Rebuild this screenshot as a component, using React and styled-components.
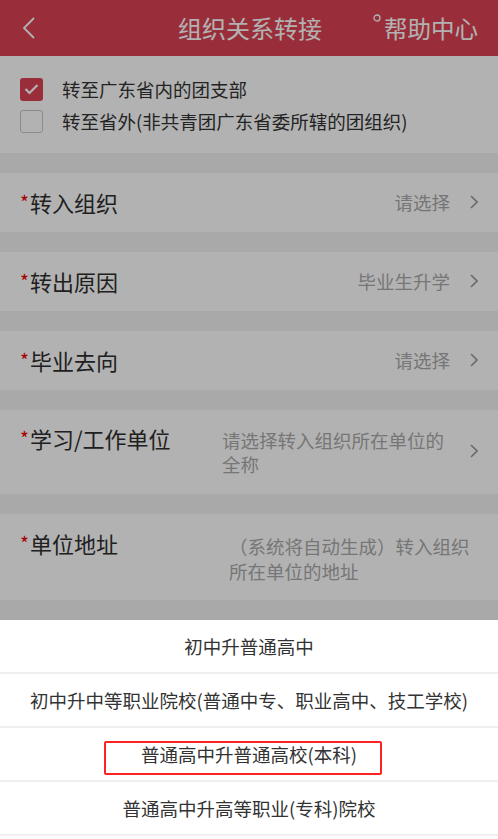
import styled, { createGlobalStyle } from "styled-components";

const GlobalStyle = createGlobalStyle`
  html, body {
    margin: 0;
    padding: 0;
    height: 100%;
    overflow: hidden;
    background: #f3f3f3;
  }
  body {
    font-family: "Noto Sans CJK SC", "Noto Sans", sans-serif;
    color: #333;
  }
`;

const Page = styled.div`
  width: 498px;
  min-height: 839px;
  background: #f3f3f3;
`;

const Header = styled.div`
  height: 56px;
  background: #dc4353;
  display: grid;
  grid-template-columns: 1fr auto 1fr;
  align-items: center;
  padding: 0 20px 0 22px;
  box-sizing: border-box;
  color: #fff;
`;

const Title = styled.div`
  font-size: 24px;
  line-height: 30px;
`;

const Help = styled.div`
  justify-self: end;
  display: flex;
  align-items: flex-start;
  font-size: 23.5px;
  line-height: 30px;
  gap: 3px;

  svg {
    margin-top: 1px;
  }
`;

const CheckSection = styled.div`
  background: #fff;
  padding: 17px 20px 16px;
  display: flex;
  flex-direction: column;
`;

const Option = styled.div`
  height: 32px;
  display: flex;
  align-items: center;
  gap: 19px;
  font-size: 18.5px;
  color: #333;
`;

const Box = styled.div`
  width: 23px;
  height: 23px;
  box-sizing: border-box;
  border-radius: 3px;
  background: ${(p) => (p.$checked ? "#dc4353" : "#fff")};
  border: ${(p) => (p.$checked ? "none" : "1.5px solid #c8c8c8")};
  display: flex;
  align-items: center;
  justify-content: center;
`;

const Stack = styled.div`
  display: flex;
  flex-direction: column;
  gap: 20px;
  margin-top: 20px;
`;

const Row = styled.div`
  background: #fff;
  display: flex;
  align-items: ${(p) => (p.$top ? "flex-start" : "center")};
  height: ${(p) => (p.$top ? "auto" : "59px")};
  padding: ${(p) => p.$pad || "0 20px 1px"};
  box-sizing: border-box;
`;

const Label = styled.div`
  font-size: 22px;
  line-height: 26px;
  color: #2e2e2e;
  white-space: nowrap;
  flex-shrink: 0;
`;

const Star = styled.span`
  color: #e00;
  font-size: 19px;
  line-height: 0;
  vertical-align: 2px;
  margin-right: 1px;
`;

const Value = styled.div`
  margin-left: auto;
  font-size: 18.5px;
  line-height: ${(p) => p.$lh || 24}px;
  color: #aaa;
  width: ${(p) => (p.$w ? `${p.$w}px` : "auto")};
  margin-top: ${(p) => p.$mt || 0}px;
  text-align: left;
`;

const Chevron = styled.svg`
  margin-left: 20px;
  flex-shrink: 0;
  align-self: center;
`;

const SectionTitle = styled.div`
  padding: 15px 20px 0 32px;
  font-size: 22px;
  line-height: 30px;
  color: #2e2e2e;
`;

const Mask = styled.div`
  position: fixed;
  inset: 0;
  background: rgba(0, 0, 0, 0.3);
`;

const Sheet = styled.div`
  position: fixed;
  left: 0;
  right: 0;
  bottom: 0;
  height: 219px;
  background: #fff;
  overflow: hidden;
`;

const SheetItem = styled.div`
  position: relative;
  height: 52px;
  border-bottom: 2px solid #efefef;
  display: flex;
  align-items: center;
  justify-content: center;
  font-size: 18.5px;
  color: #333;
  white-space: nowrap;
`;

const Highlight = styled.div`
  position: absolute;
  left: 104px;
  top: 13px;
  width: 278px;
  height: 34px;
  box-sizing: border-box;
  border: 2px solid #f22;
  border-radius: 2px;
`;

function Arrow() {
  return (
    <Chevron width="8" height="14" viewBox="0 0 8 14">
      <polyline
        points="1,1 7,7 1,13"
        fill="none"
        stroke="#999"
        strokeWidth="1.6"
      />
    </Chevron>
  );
}

const fields = [
  { label: "转入组织", value: "请选择" },
  { label: "转出原因", value: "毕业生升学" },
  { label: "毕业去向", value: "请选择" },
];

const choices = [
  "初中升普通高中",
  "初中升中等职业院校(普通中专、职业高中、技工学校)",
  "普通高中升普通高校(本科)",
  "普通高中升高等职业(专科)院校",
];

function App() {
  return (
    <>
      <GlobalStyle />
      <Page>
        <Header>
          <svg width="14" height="22" viewBox="0 0 14 22">
            <polyline
              points="12,1 2,11 12,21"
              fill="none"
              stroke="#fff"
              strokeWidth="1.8"
            />
          </svg>
          <Title>组织关系转接</Title>
          <Help>
            <svg width="8" height="8" viewBox="0 0 8 8">
              <circle cx="4" cy="4" r="3" fill="none" stroke="#fff" strokeWidth="1.3" />
            </svg>
            帮助中心
          </Help>
        </Header>

        <CheckSection>
          <Option>
            <Box $checked>
              <svg width="15" height="12" viewBox="0 0 15 12">
                <polyline
                  points="1.5,6 5.5,10 13.5,2"
                  fill="none"
                  stroke="#fff"
                  strokeWidth="2.2"
                />
              </svg>
            </Box>
            转至广东省内的团支部
          </Option>
          <Option>
            <Box />
            转至省外(非共青团广东省委所辖的团组织)
          </Option>
        </CheckSection>

        <Stack>
          {fields.map((f) => (
            <Row key={f.label}>
              <Label>
                <Star>*</Star>
                {f.label}
              </Label>
              <Value>{f.value}</Value>
              <Arrow />
            </Row>
          ))}
          <Row $top $pad="15px 20px 18px">
            <Label>
              <Star>*</Star>
              学习/工作单位
            </Label>
            <Value $w={228} $mt={3}>
              请选择转入组织所在单位的全称
            </Value>
            <Arrow />
          </Row>
          <Row $top $pad="16px 20px 16px">
            <Label>
              <Star>*</Star>
              单位地址
            </Label>
            <Value $w={249} $mt={4} $lh={25}>
              （系统将自动生成）转入组织所在单位的地址
            </Value>
          </Row>
        </Stack>
        <SectionTitle>附件上传</SectionTitle>
      </Page>

      <Mask />
      <Sheet>
        {choices.map((c, i) => (
          <SheetItem key={c}>
            {c}
            {i === 2 && <Highlight />}
          </SheetItem>
        ))}
      </Sheet>
    </>
  );
}

export default App;
